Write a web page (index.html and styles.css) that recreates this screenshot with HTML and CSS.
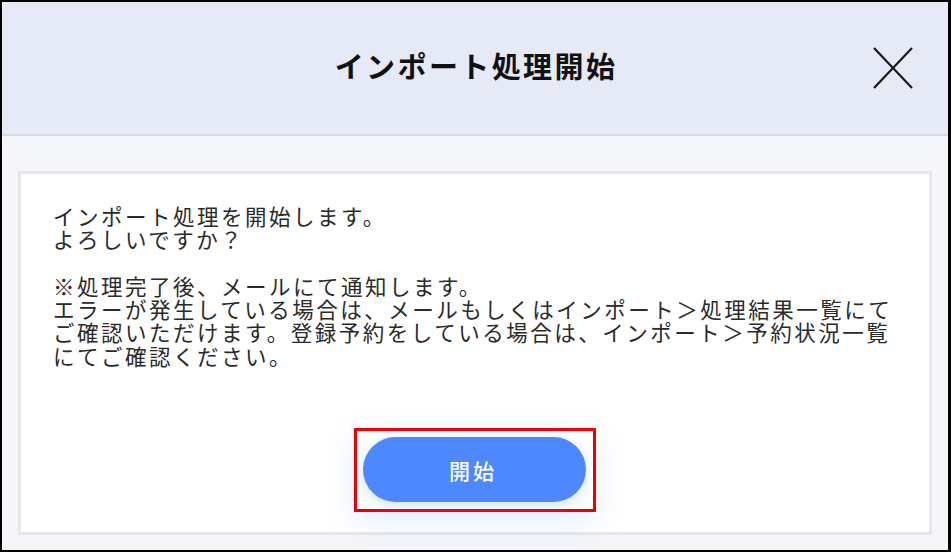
FILE: index.html
```html
<!DOCTYPE html>
<html lang="ja">
<head>
<meta charset="utf-8">
<title>インポート処理開始</title>
<link rel="stylesheet" href="styles.css">
</head>
<body>
<div class="frame">
  <header class="dialog-header">
    <div class="spacer"></div>
    <h1 class="dialog-title">インポート処理開始</h1>
    <div class="close-cell">
      <button class="close-btn" type="button" aria-label="閉じる">
        <svg width="40" height="42" viewBox="0 0 40 42" aria-hidden="true">
          <path d="M1 1 L39 41 M39 1 L1 41" stroke="#1a1a1a" stroke-width="2.2" fill="none"/>
        </svg>
      </button>
    </div>
  </header>
  <main class="dialog-body">
    <section class="panel">
      <div class="message">
        <p class="msg">インポート処理を開始します。<br>よろしいですか？</p>
        <p class="msg msg-note">※処理完了後、メールにて通知します。<br>エラーが発生している場合は、メールもしくはインポート＞処理結果一覧にて<br>ご確認いただけます。登録予約をしている場合は、インポート＞予約状況一覧<br>にてご確認ください。</p>
      </div>
      <div class="actions">
        <div class="highlight">
          <button class="start-btn" type="button">開始</button>
        </div>
      </div>
    </section>
  </main>
</div>
</body>
</html>
```
FILE: styles.css
```css
* { box-sizing: border-box; }
html, body { margin: 0; padding: 0; }
body {
  width: 951px;
  height: 552px;
  font-family: "Noto Sans CJK JP", "Noto Sans", sans-serif;
  background: #ffffff;
}
.frame {
  width: 951px;
  height: 552px;
  border-style: solid;
  border-color: #000;
  border-width: 2px 3px 2px 2px;
  display: flex;
  flex-direction: column;
  background: #f5f6fa;
}
.dialog-header {
  height: 134px;
  flex: 0 0 134px;
  background: #e6e9f6;
  border-bottom: 2px solid #d6d9f0;
  display: grid;
  grid-template-columns: 1fr auto 1fr;
  align-items: center;
  padding-bottom: 6px;
}
.dialog-title {
  margin: 0;
  font-size: 29px;
  font-weight: 700;
  letter-spacing: 2.4px;
  color: #111;
  line-height: 1;
  padding-left: 2px;
}
.close-cell {
  display: flex;
  justify-content: flex-end;
  padding-right: 35px;
  padding-top: 6px;
}
.close-btn {
  border: 0;
  background: none;
  padding: 0;
  display: block;
  cursor: pointer;
}
.close-btn svg { display: block; }
.dialog-body {
  flex: 1;
  padding: 35px 16px 15px 16px;
  display: flex;
}
.panel {
  flex: 1;
  background: #fff;
  border: 3px solid #e7e7e9;
  padding: 30px 20px 20px 32px;
  display: flex;
  flex-direction: column;
}
.message { color: #2a2a2a; }
.msg {
  margin: 0;
  font-size: 21.5px;
  letter-spacing: 2.5px;
  line-height: 23.3px;
  white-space: nowrap;
}
.msg-note { margin-top: 23.3px; }
.actions {
  margin-top: auto;
  display: flex;
  justify-content: center;
  margin-left: -12px;
}
.highlight {
  border: 3px solid #ee0000;
  padding: 6px 7px 7px 6px;
  background: #fff;
  box-shadow: 0 8px 30px rgba(90, 130, 255, 0.16);
}
.start-btn {
  display: block;
  width: 223px;
  height: 65px;
  border: 0;
  border-radius: 33px;
  background: #4d88ff;
  color: #fff;
  font-family: "Noto Sans CJK JP", "Noto Sans", sans-serif;
  font-size: 21px;
  font-weight: 500;
  letter-spacing: 3px;
  padding-left: 3px;
  box-shadow: 0 4px 14px rgba(77, 136, 255, 0.25);
}
```
